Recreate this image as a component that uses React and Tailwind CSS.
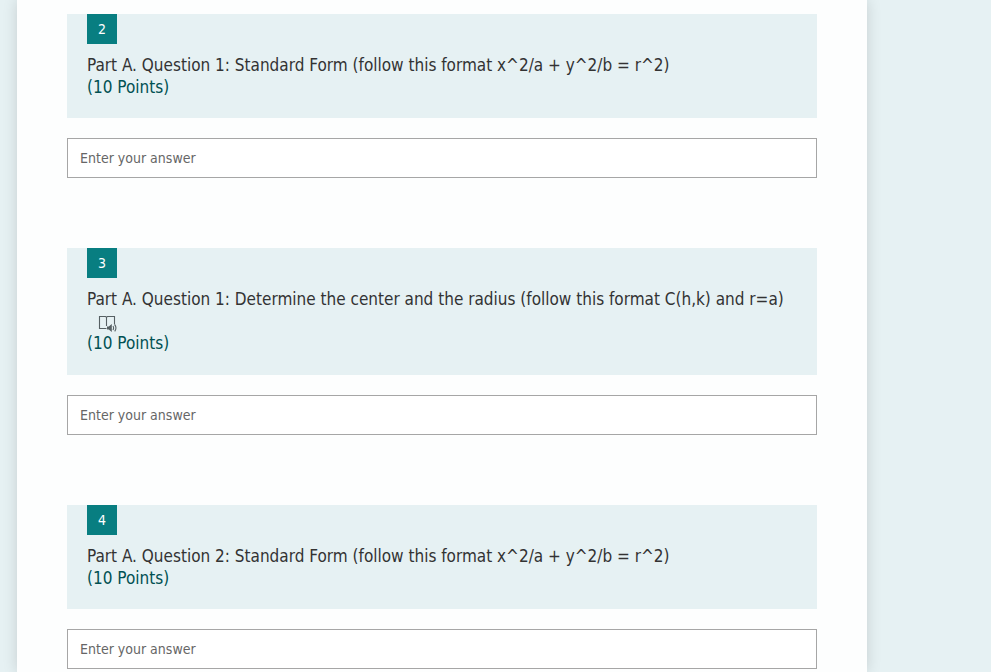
import React from "react";

const questions = [
  {
    number: 2,
    title: "Part A. Question 1: Standard Form (follow this format x^2/a + y^2/b = r^2)",
  },
  {
    number: 3,
    title: "Part A. Question 1: Determine the center and the radius (follow this format C(h,k) and r=a)",
    reader: true,
  },
  {
    number: 4,
    title: "Part A. Question 2: Standard Form (follow this format x^2/a + y^2/b = r^2)",
  },
];

function ReaderIcon() {
  return (
    <svg
      className="h-[17px] w-[19px]"
      viewBox="0 0 19 17"
      fill="none"
      stroke="#566063"
      strokeWidth="1.1"
      aria-hidden="true"
    >
      <path d="M8.5 13.5H1.5V1.5H7.5L8.5 2.2L9.5 1.5H16.5V9.5" />
      <path d="M8.5 2V11" />
      <path d="M9 11.5H10.8L13.8 9V17L10.8 14.5H9Z" fill="#566063" stroke="none" />
      <path d="M15 11Q16.2 13 15 15M16.7 9.7Q19.2 13 16.7 16.3" />
    </svg>
  );
}

function Question({ number, title, reader }) {
  const id = `answer-${number}`;
  return (
    <section>
      <div className={`bg-[#e6f1f3] px-5 ${reader ? "pb-[21px]" : "pb-5"}`}>
        <div className="flex h-[30px] w-[30px] items-center justify-center bg-[#087e81] text-sm font-medium text-white">
          {number}
        </div>
        <div className="pt-[10px] text-[17px] leading-[22px]">
          <label htmlFor={id} className="block text-[#333333]">
            {title}
          </label>
          {reader && (
            <button
              type="button"
              aria-label="Immersive Reader"
              className="flex h-[22px] items-end pl-[11px]"
            >
              <ReaderIcon />
            </button>
          )}
          <p className="text-[#005052]">(10 Points)</p>
        </div>
      </div>
      <input
        id={id}
        type="text"
        placeholder="Enter your answer"
        className="mt-5 block h-10 w-full border border-[#a6a6a6] bg-white px-3 text-sm text-[#333333] outline-none placeholder:text-[#666666]"
      />
    </section>
  );
}

export default function App() {
  return (
    <div className="h-screen overflow-hidden bg-[#e6f1f3] pl-[17px] font-['DejaVu_Sans_Condensed','DejaVu_Sans',sans-serif]">
      <main className="min-h-full max-w-[850px] bg-[#fdfefe] px-[50px] pt-[14px] shadow-[0_0_14px_rgba(0,0,0,0.14)]">
        <form className="flex flex-col gap-[70px]">
          {questions.map((q) => (
            <Question key={q.number} {...q} />
          ))}
        </form>
      </main>
    </div>
  );
}
